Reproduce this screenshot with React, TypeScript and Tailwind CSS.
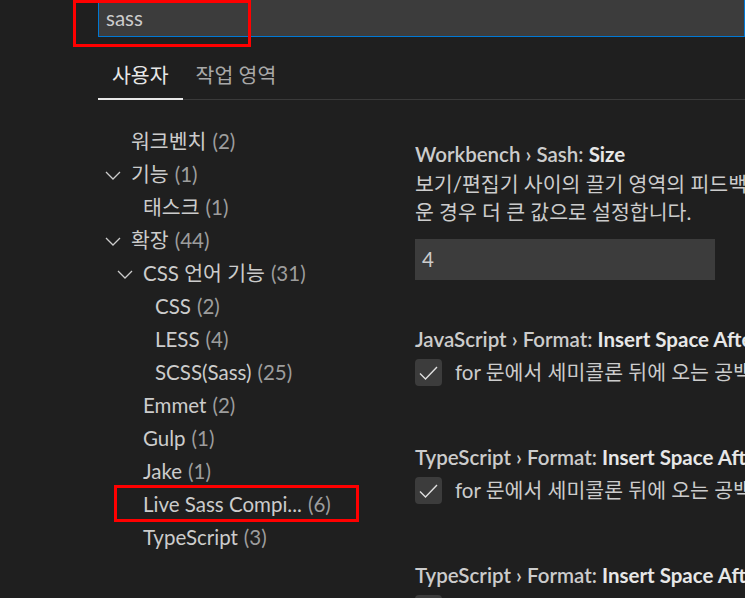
import React from "react";

type Node = { label: string; count: number; depth: number; open?: boolean };

const TREE: Node[] = [
  { label: "워크벤치", count: 2, depth: 1 },
  { label: "기능", count: 1, depth: 1, open: true },
  { label: "태스크", count: 1, depth: 2 },
  { label: "확장", count: 44, depth: 1, open: true },
  { label: "CSS 언어 기능", count: 31, depth: 2, open: true },
  { label: "CSS", count: 2, depth: 3 },
  { label: "LESS", count: 4, depth: 3 },
  { label: "SCSS(Sass)", count: 25, depth: 3 },
  { label: "Emmet", count: 2, depth: 2 },
  { label: "Gulp", count: 1, depth: 2 },
  { label: "Jake", count: 1, depth: 2 },
  { label: "Live Sass Compi...", count: 6, depth: 2 },
  { label: "TypeScript", count: 3, depth: 2 },
];

const PAD: Record<number, string> = { 1: "pl-[7px]", 2: "pl-[19px]", 3: "pl-[31px]" };

function Chevron() {
  return (
    <svg width="16" height="16" viewBox="0 0 16 16" fill="none" className="text-[#cccccc]">
      <path d="M1 5l7 7 7-7" stroke="currentColor" strokeWidth="1.3" />
    </svg>
  );
}

function CheckBox() {
  return (
    <span className="flex h-[27px] w-[27px] shrink-0 items-center justify-center rounded-[4px] bg-[#3c3c3c]">
      <svg width="27" height="27" viewBox="0 0 27 27" fill="none">
        <path d="M5 14.5l5.5 5.5L22 8" stroke="#e0e0e0" strokeWidth="1.4" />
      </svg>
    </span>
  );
}

function Title({ cat, name }: { cat: string; name: string }) {
  return (
    <div className="whitespace-nowrap leading-[28px]">
      <span className="font-semibold text-[#cccccc]">{cat} </span>
      <span className="font-bold text-[#e7e7e7]">{name}</span>
    </div>
  );
}

function BoolSetting({ cat, name, desc }: { cat: string; name: string; desc: string }) {
  return (
    <div className="pb-[57px]">
      <Title cat={cat} name={name} />
      <div className="mt-[5px] flex items-center gap-[13px]">
        <CheckBox />
        <span className="whitespace-nowrap leading-[28px] text-[#cccccc]">{desc}</span>
      </div>
    </div>
  );
}

export default function App() {
  return (
    <div
      className="relative h-[598px] w-full overflow-hidden bg-[#1f1f1f] text-[20.5px] text-[#cccccc]"
      style={{ fontFamily: 'Lato, "Noto Sans CJK KR", sans-serif' }}
    >
      <div className="pl-[98px]">
        {/* search */}
        <div className="-mt-[4px] flex h-[41px] items-center border border-[#0078d4] bg-[#3c3c3c] pl-[7px] pt-[4px]">
          <span className="text-[#cccccc]">sass</span>
        </div>

        {/* tabs */}
        <div className="mt-[25px] flex border-b border-[#3a3a3a]">
          <div className="-mb-px border-b-2 border-[#e7e7e7] px-[14px] pb-[10px] leading-[26px] text-[#e7e7e7]">
            사용자
          </div>
          <div className="px-[13px] pb-[10px] leading-[26px] text-[#a8a8a8]">작업 영역</div>
        </div>

        {/* body */}
        <div className="flex">
          <div className="w-[317px] shrink-0 pt-[25px]">
            {TREE.map((n) => (
              <div key={n.label} className={`flex h-[33px] items-center whitespace-nowrap ${PAD[n.depth]}`}>
                <span className="flex w-[16px] shrink-0 items-center">{n.open && <Chevron />}</span>
                <span className="ml-[10px] text-[#cccccc]">{n.label}</span>
                <span className="ml-[6px] text-[#9d9d9d]">({n.count})</span>
              </div>
            ))}
          </div>

          <div className="min-w-0 flex-1 pt-[40px]">
            <div className="pb-[45px]">
              <Title cat="Workbench › Sash:" name="Size" />
              <div className="mt-[2px] whitespace-nowrap leading-[28px] text-[#cccccc]">
                보기/편집기 사이의 끌기 영역의 피드백 영역 크기(픽셀)를 제어합니다. 마우스를 사용하여 보기 간 크기를 조정하기 어려
              </div>
              <div className="whitespace-nowrap leading-[28px] text-[#cccccc]">
                운 경우 더 큰 값으로 설정합니다.
              </div>
              <div className="mt-[13px] flex h-[41px] w-[300px] items-center bg-[#3c3c3c] pl-[7px] text-[#cccccc]">
                4
              </div>
            </div>
            <BoolSetting
              cat="JavaScript › Format:"
              name="Insert Space After Semicolon In For Statements"
              desc="for 문에서 세미콜론 뒤에 오는 공백 처리를 정의합니다."
            />
            <BoolSetting
              cat="TypeScript › Format:"
              name="Insert Space After Semicolon In For Statements"
              desc="for 문에서 세미콜론 뒤에 오는 공백 처리를 정의합니다."
            />
            <BoolSetting
              cat="TypeScript › Format:"
              name="Insert Space After Type Assertion"
              desc="TypeScript에서 형식 어설션 뒤에 오는 공백 처리를 정의합니다."
            />
          </div>
        </div>
      </div>

      {/* annotation boxes */}
      <div className="pointer-events-none absolute left-[73px] top-0 h-[47px] w-[178px] border-[3px] border-[#ff0000]" />
      <div className="pointer-events-none absolute left-[114px] top-[485px] h-[37px] w-[245px] border-[3px] border-[#ff0000]" />
    </div>
  );
}
